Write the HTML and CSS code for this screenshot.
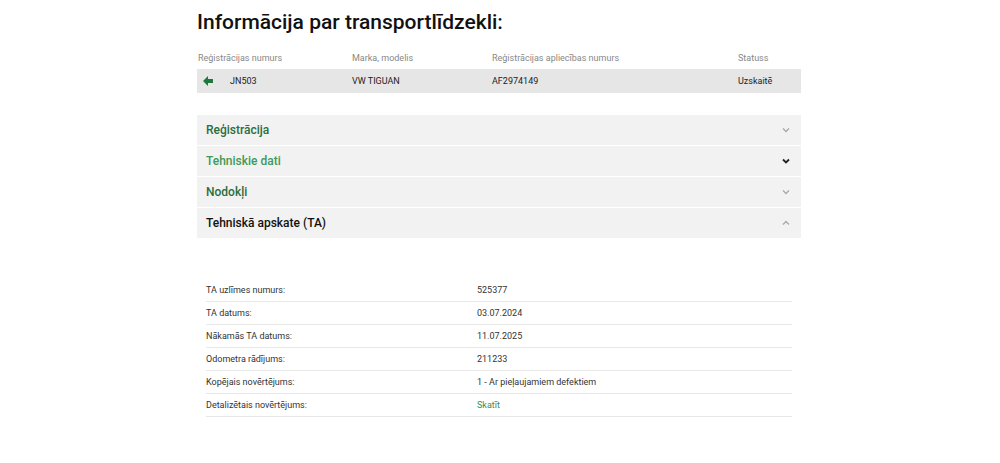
FILE: index.html
```html
<!DOCTYPE html>
<html lang="lv">
<head>
  <meta charset="UTF-8" />
  <title>Informācija par transportlīdzekli</title>
  <link rel="stylesheet" href="styles.css">
</head>
<body>
  <div class="page">
    <h1 class="title">Informācija par transportlīdzekli:</h1>

    <div class="vehicle">
      <div class="vrow vhead">
        <div class="c1">Reģistrācijas numurs</div>
        <div class="c2">Marka, modelis</div>
        <div class="c3">Reģistrācijas apliecības numurs</div>
        <div class="c4">Statuss</div>
      </div>
      <div class="vrow vdata">
        <div class="c1">
          <svg class="back" width="10" height="10" viewBox="0 0 10 10"><path d="M0 5 L5 0 L5 3 L10 3 L10 7 L5 7 L5 10 Z" fill="#1e7a3c"/></svg>
          <span>JN503</span>
        </div>
        <div class="c2">VW TIGUAN</div>
        <div class="c3">AF2974149</div>
        <div class="c4">Uzskaitē</div>
      </div>
    </div>

    <div class="accordion">
      <div class="acc-item">
        <span class="acc-title green">Reģistrācija</span>
        <svg class="chev light" width="8" height="6" viewBox="0 0 8 6"><path d="M1 1.5 L4 4.5 L7 1.5" fill="none" stroke="currentColor" stroke-width="1.3"/></svg>
      </div>
      <div class="acc-item">
        <span class="acc-title green hover">Tehniskie dati</span>
        <svg class="chev dark" width="8" height="6" viewBox="0 0 8 6"><path d="M1 1.5 L4 4.5 L7 1.5" fill="none" stroke="currentColor" stroke-width="1.8"/></svg>
      </div>
      <div class="acc-item">
        <span class="acc-title green">Nodokļi</span>
        <svg class="chev light" width="8" height="6" viewBox="0 0 8 6"><path d="M1 1.5 L4 4.5 L7 1.5" fill="none" stroke="currentColor" stroke-width="1.3"/></svg>
      </div>
      <div class="acc-item open">
        <span class="acc-title">Tehniskā apskate (TA)</span>
        <svg class="chev light" width="8" height="6" viewBox="0 0 8 6"><path d="M1 4.5 L4 1.5 L7 4.5" fill="none" stroke="currentColor" stroke-width="1.3"/></svg>
      </div>
    </div>

    <div class="ta-table">
      <div class="ta-row"><div class="lbl">TA uzlīmes numurs:</div><div class="val">525377</div></div>
      <div class="ta-row"><div class="lbl">TA datums:</div><div class="val">03.07.2024</div></div>
      <div class="ta-row"><div class="lbl">Nākamās TA datums:</div><div class="val">11.07.2025</div></div>
      <div class="ta-row"><div class="lbl">Odometra rādījums:</div><div class="val">211233</div></div>
      <div class="ta-row"><div class="lbl">Kopējais novērtējums:</div><div class="val">1 - Ar pieļaujamiem defektiem</div></div>
      <div class="ta-row"><div class="lbl">Detalizētais novērtējums:</div><div class="val"><a href="#">Skatīt</a></div></div>
    </div>
  </div>
</body>
</html>
```

FILE: styles.css
```css
body {
  margin: 0;
  padding-right: 2px;
  background: #fff;
  font-family: Roboto, 'Liberation Sans', sans-serif;
  color: #222;
}
.page {
  width: 604px;
  margin: 0 auto;
  padding-top: 8px;
}
.title {
  margin: 0 0 15px;
  font-size: 21px;
  font-weight: 500;
  color: #111;
  line-height: 28px;
}
.vrow {
  display: flex;
  align-items: center;
  font-size: 9px;
}
.vhead {
  height: 14px;
  margin-bottom: 4px;
  color: #888;
}
.vdata {
  height: 24px;
  background: #e6e6e6;
  color: #222;
}
.c1 { width: 155px; display: flex; align-items: center; }
.c2 { width: 140px; }
.c3 { width: 246px; }
.c4 { flex: 1; }
.vhead .c1 { padding-left: 1px; width: 154px; }
.vdata .c1 .back { margin-left: 6px; margin-right: 17px; }
.accordion {
  margin-top: 22px;
}
.acc-item {
  height: 30px;
  background: #f2f2f2;
  border-bottom: 1px solid #fff;
  display: flex;
  align-items: center;
  justify-content: space-between;
  padding: 0 11px 0 9px;
}
.acc-title {
  font-size: 12px;
  font-weight: 500;
  color: #111;
}
.acc-title.green { color: #2a6e3c; }
.acc-title.hover { color: #3f9a58; }
.chev.light { color: #a8a8a8; }
.chev.dark { color: #222; }
.ta-table {
  margin: 40px 9px 0;
}
.ta-row {
  display: flex;
  height: 22px;
  align-items: center;
  border-bottom: 1px solid #e8e8e8;
  font-size: 9px;
  color: #333;
}
.lbl { width: 271px; }
.val { flex: 1; }
.val a {
  color: #3a8c52;
  text-decoration: none;
}
```
